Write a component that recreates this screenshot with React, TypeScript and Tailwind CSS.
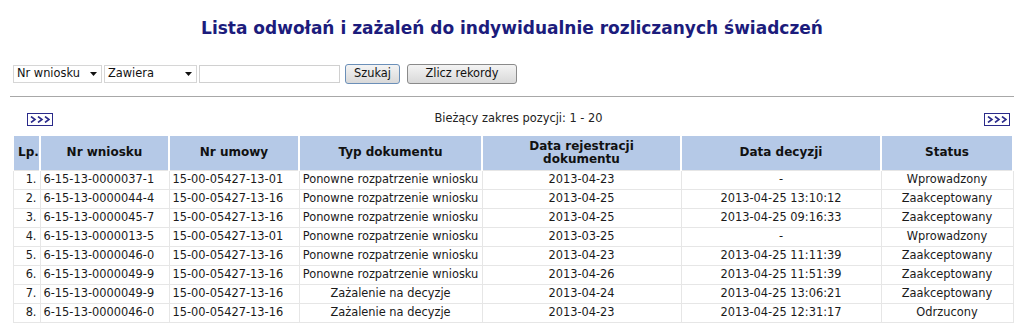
import React from "react";

const rows = [
  ["1.", "6-15-13-0000037-1", "15-00-05427-13-01", "Ponowne rozpatrzenie wniosku", "2013-04-23", "-", "Wprowadzony"],
  ["2.", "6-15-13-0000044-4", "15-00-05427-13-16", "Ponowne rozpatrzenie wniosku", "2013-04-25", "2013-04-25 13:10:12", "Zaakceptowany"],
  ["3.", "6-15-13-0000045-7", "15-00-05427-13-16", "Ponowne rozpatrzenie wniosku", "2013-04-25", "2013-04-25 09:16:33", "Zaakceptowany"],
  ["4.", "6-15-13-0000013-5", "15-00-05427-13-01", "Ponowne rozpatrzenie wniosku", "2013-03-25", "-", "Wprowadzony"],
  ["5.", "6-15-13-0000046-0", "15-00-05427-13-16", "Ponowne rozpatrzenie wniosku", "2013-04-23", "2013-04-25 11:11:39", "Zaakceptowany"],
  ["6.", "6-15-13-0000049-9", "15-00-05427-13-16", "Ponowne rozpatrzenie wniosku", "2013-04-26", "2013-04-25 11:51:39", "Zaakceptowany"],
  ["7.", "6-15-13-0000049-9", "15-00-05427-13-16", "Zażalenie na decyzje", "2013-04-24", "2013-04-25 13:06:21", "Zaakceptowany"],
  ["8.", "6-15-13-0000046-0", "15-00-05427-13-16", "Zażalenie na decyzje", "2013-04-23", "2013-04-25 12:31:17", "Odrzucony"],
];

function Arrow() {
  return (
    <svg width="7" height="4" viewBox="0 0 7 4" className="block">
      <path d="M0 0 L7 0 L3.5 4 Z" fill="#111" />
    </svg>
  );
}

function NextBtn() {
  return (
    <div className="flex h-[13px] w-[26px] items-center justify-center border border-[#2a2a8a] bg-white">
      <svg width="20" height="7" viewBox="0 0 20 7" className="block">
        <path d="M1 0.5 L5 3.5 L1 6.5 M8 0.5 L12 3.5 L8 6.5 M15 0.5 L19 3.5 L15 6.5" fill="none" stroke="#2a2a8a" strokeWidth="1.6" />
      </svg>
    </div>
  );
}

export default function App() {
  const th = "h-[34px] bg-[#b5c9e7] border-x-2 border-white px-1 text-center align-middle text-[12px] font-bold leading-[13px] text-[#111]";
  const td = "h-[19px] border border-[#e6e6e6] px-[3px] py-0 text-[11.4px] leading-[17px] text-[#1a1a1a] whitespace-nowrap";
  return (
    <div className="min-h-[325px] w-[1024px] bg-white" style={{ fontFamily: '"DejaVu Sans", Verdana, sans-serif' }}>
      <div className="pt-[18px] text-center text-[17px] font-bold leading-[20px] text-[#1c1c7c]">
        Lista odwołań i zażaleń do indywidualnie rozliczanych świadczeń
      </div>

      <div className="mt-[26px] flex h-[20px] items-center pl-[13px] text-[11.4px] text-[#111]">
        <div className="flex h-[18px] w-[89px] items-center justify-between border border-[#d6d6d6] bg-white pl-[3px] pr-[4px]">
          <span>Nr wniosku</span>
          <Arrow />
        </div>
        <div className="ml-[2px] flex h-[18px] w-[93px] items-center justify-between border border-[#d6d6d6] bg-white pl-[3px] pr-[4px]">
          <span>Zawiera</span>
          <Arrow />
        </div>
        <div className="ml-[2px] h-[18px] w-[141px] border border-[#d0d0d0] bg-white" />
        <div className="ml-[5px] flex h-[20px] w-[55px] items-center justify-center rounded-[3px] border border-[#6b8fb8] bg-gradient-to-b from-[#f4f4f4] to-[#d9d9d9]">
          Szukaj
        </div>
        <div className="ml-[7px] flex h-[20px] w-[110px] items-center justify-center rounded-[3px] border border-[#8a8a8a] bg-gradient-to-b from-[#f4f4f4] to-[#d9d9d9]">
          Zlicz rekordy
        </div>
      </div>

      <div className="mx-[10px] mt-[12px] h-[1px] bg-[#a8a8a8]" />

      <div className="mt-[15px] flex h-[14px] items-center justify-between pl-[27px] pr-[14px]">
        <NextBtn />
        <span className="text-[11.4px] text-[#222]">Bieżący zakres pozycji: 1 - 20</span>
        <NextBtn />
      </div>

      <div className="mt-[10px] px-[12px]">
        <table className="w-[1000px] table-fixed border-collapse">
          <colgroup>
            <col className="w-[27px]" />
            <col className="w-[129px]" />
            <col className="w-[130px]" />
            <col className="w-[183px]" />
            <col className="w-[199px]" />
            <col className="w-[200px]" />
            <col className="w-[132px]" />
          </colgroup>
          <thead>
            <tr>
              <th className={th + " px-0"}>Lp.</th>
              <th className={th}>Nr wniosku</th>
              <th className={th}>Nr umowy</th>
              <th className={th}>Typ dokumentu</th>
              <th className={th}>
                Data rejestracji
                <br />
                dokumentu
              </th>
              <th className={th}>Data decyzji</th>
              <th className={th}>Status</th>
            </tr>
          </thead>
          <tbody>
            {rows.map((r, i) => (
              <tr key={i}>
                <td className={td + " text-right"}>{r[0]}</td>
                <td className={td + " text-left"}>{r[1]}</td>
                <td className={td + " text-left"}>{r[2]}</td>
                <td className={td + " px-[2px] text-center"}>{r[3]}</td>
                <td className={td + " text-center"}>{r[4]}</td>
                <td className={td + " text-center"}>{r[5]}</td>
                <td className={td + " text-center"}>{r[6]}</td>
              </tr>
            ))}
          </tbody>
        </table>
      </div>
    </div>
  );
}
